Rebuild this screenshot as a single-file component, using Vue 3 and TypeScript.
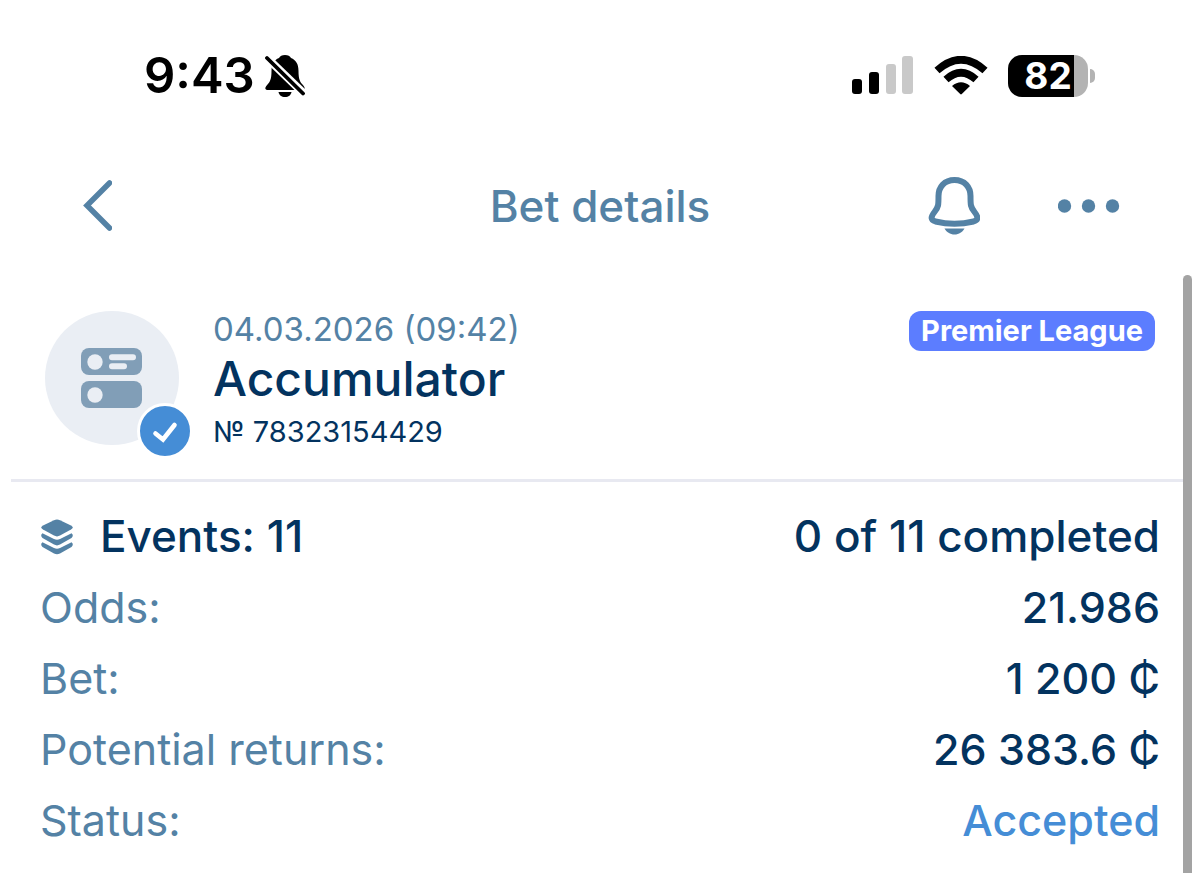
<script setup lang="ts">
interface Row {
  label: string
  value: string
  tone?: 'accent'
}

const time = '9:43'
const battery = 82

const bet = {
  date: '04.03.2026 (09:42)',
  kind: 'Accumulator',
  number: '№ 78323154429',
  league: 'Premier League',
  events: 11,
  completed: 0,
}

const rows: Row[] = [
  { label: 'Odds:', value: '21.986' },
  { label: 'Bet:', value: '1 200 ₵' },
  { label: 'Potential returns:', value: '26 383.6 ₵' },
  { label: 'Status:', value: 'Accepted', tone: 'accent' },
]
</script>

<template>
  <div class="screen">
    <div class="status-bar">
      <div class="clock">
        <span>{{ time }}</span>
        <svg width="40" height="44" viewBox="0 0 40 44" aria-label="Silent mode">
          <path d="M20 1c-3 0-5 1.200-6 3C9 6 6.500 10 6.500 17c0 8-1.500 11-4 13.500C.500 32.500 0 34 .500 35q.500 1 2 1h35q1.500 0 2-1c.500-1 0-2.500-2-4.500-2.500-2.500-4-5.500-4-13.500 0-7-2.500-11-7.500-13C25 2.200 23 1 20 1z" />
          <path d="M13.500 38h13c-.500 3-3 5-6.500 5s-6-2-6.500-5z" />
          <path d="M-1 1L40 40.500" fill="none" stroke="#fff" stroke-width="8" />
          <path d="M2 4L38 39.500" fill="none" stroke="#000" stroke-width="3.800" stroke-linecap="round" />
        </svg>
      </div>
      <div class="indicators">
        <svg width="62" height="40" viewBox="0 0 62 40" aria-label="Signal">
          <rect x="0" y="23" width="10" height="15" rx="3" />
          <rect x="17" y="16" width="10" height="22" rx="3" />
          <rect x="34" y="8" width="10" height="30" rx="3" fill="#c9c9c9" />
          <rect x="50" y="0" width="11" height="38" rx="3" fill="#c9c9c9" />
        </svg>
        <svg width="54" height="40" viewBox="0 0 54 40" aria-label="Wi-Fi">
          <path d="M3 14.500Q27-7 51 14.500" fill="none" stroke="#000" stroke-width="7.600" />
          <path d="M12 23.500Q27 10 42 23.500" fill="none" stroke="#000" stroke-width="7.600" />
          <path d="M18 30Q27 22.500 36 30L27.800 38q-.800.800-1.600 0z" />
        </svg>
        <div class="battery">
          <span class="battery-body">{{ battery }}</span>
          <span class="battery-tip"></span>
        </div>
      </div>
    </div>

    <header class="nav">
      <button type="button" class="icon-button back" aria-label="Back">
        <svg width="32" height="54" viewBox="0 0 32 54">
          <path d="M29.500 4L7 26.500L29.500 49" fill="none" stroke="currentColor" stroke-width="5.500" stroke-linecap="round" stroke-linejoin="miter" />
        </svg>
      </button>
      <h1>Bet details</h1>
      <div class="actions">
        <button type="button" class="icon-button" aria-label="Notifications">
          <svg width="52" height="60" viewBox="0 0 52 60">
            <path d="M26.500 4C16.500 4 10.500 11 10.500 20c0 9 0 11-4 16-4 5-4 8 1 9.500q19 4.500 38 0c5-1.500 5-4.500 1-9.500-4-5-4-7-4-16C42.500 11 36.500 4 26.500 4z" fill="none" stroke="currentColor" stroke-width="6" stroke-linejoin="round" />
            <path d="M16.500 52.500h20c-2 3.500-5.500 6-10 6s-8-2.500-10-6z" fill="currentColor" />
          </svg>
        </button>
        <button type="button" class="icon-button" aria-label="More">
          <svg width="62" height="14" viewBox="0 0 62 14" fill="currentColor">
            <circle cx="6.500" cy="7" r="6.700" />
            <circle cx="30.500" cy="7" r="6.700" />
            <circle cx="54.500" cy="7" r="6.700" />
          </svg>
        </button>
      </div>
    </header>

    <main class="content">
      <section class="summary">
        <div class="avatar">
          <svg width="62" height="62" viewBox="0 0 62 62">
            <rect x="0" y="1" width="61" height="27" rx="8" fill="#819eb7" />
            <circle cx="14" cy="15" r="7.700" fill="#eaeef4" />
            <path d="M31 10.200H52M31 19.300H43" stroke="#eaeef4" stroke-width="6" stroke-linecap="round" />
            <rect x="0" y="34" width="61" height="27" rx="8" fill="#819eb7" />
            <circle cx="14" cy="48" r="7.700" fill="#eaeef4" />
          </svg>
          <span class="check">
            <svg width="50" height="50" viewBox="0 0 50 50">
              <path d="M15.500 27.500L23 33.500L34.500 19" fill="none" stroke="#fff" stroke-width="4.600" stroke-linecap="round" stroke-linejoin="miter" />
            </svg>
          </span>
        </div>
        <div class="info">
          <span class="date">{{ bet.date }}</span>
          <h2>{{ bet.kind }}</h2>
          <span class="number">{{ bet.number }}</span>
        </div>
        <span class="league">{{ bet.league }}</span>
      </section>

      <dl class="details">
        <div class="row strong">
          <dt>
            <svg width="34" height="36" viewBox="0 0 34 36" fill="#5482a5">
              <path d="M14 1.200q3-1.400 6 0l11 5.200q3.400 2.100 0 4.200l-11 6q-3 1.600-6 0l-11-6Q-.400 8.500 3 6.400z" />
              <path d="M2.500 14.300L14 20.100q3 1.400 6 0l11.500-5.800q2.600 2.200 0 4.700L20 25.600q-3 1.600-6 0L2.500 19q-2.600-2.500 0-4.700z" />
              <path d="M2.500 23.300L14 29.100q3 1.400 6 0l11.500-5.800q2.600 2.200 0 4.700L20 34.400q-3 1.600-6 0L2.500 28q-2.600-2.500 0-4.700z" />
            </svg>
            <span>Events: {{ bet.events }}</span>
          </dt>
          <dd>{{ bet.completed }} of {{ bet.events }} completed</dd>
        </div>
        <div v-for="row in rows" :key="row.label" class="row">
          <dt>{{ row.label }}</dt>
          <dd :class="row.tone">{{ row.value }}</dd>
        </div>
      </dl>
      <div class="scroll-thumb"></div>
    </main>
  </div>
</template>

<style>
body {
  margin: 0;
  background: #fff;
}
</style>

<style scoped>
.screen {
  display: flex;
  flex-direction: column;
  min-height: 100vh;
  overflow: hidden;
  background: #fff;
  color: #03335f;
  font-family: Inter, "Liberation Sans", sans-serif;
}

.screen,
.screen * {
  box-sizing: border-box;
}

svg {
  display: block;
  flex: none;
}

.status-bar {
  display: flex;
  justify-content: space-between;
  align-items: center;
  height: 152px;
  padding: 0 105px 0 144px;
  color: #000;
}

.clock {
  display: flex;
  align-items: center;
  gap: 10px;
  font-size: 49px;
  font-weight: 600;
  line-height: 60px;
}

.indicators {
  display: flex;
  align-items: center;
  gap: 20px;
}

.battery {
  display: flex;
  align-items: center;
  gap: 2px;
}

.battery-body {
  width: 80px;
  height: 42px;
  border-radius: 14px;
  background: linear-gradient(to right, #000 66px, #b3b3b3 66px);
  color: #fff;
  font-size: 37px;
  font-weight: 700;
  line-height: 42px;
  text-align: center;
}

.battery-tip {
  width: 5px;
  height: 14px;
  border-radius: 0 7px 7px 0;
  background: #b3b3b3;
}

.nav {
  display: grid;
  grid-template-columns: 1fr auto 1fr;
  align-items: center;
  height: 108px;
  padding: 0 80px;
  color: #5482a5;
}

h1,
h2,
dl,
dd {
  margin: 0;
}

h1 {
  font-size: 44px;
  font-weight: 500;
  line-height: 56px;
}

.icon-button {
  display: flex;
  padding: 0;
  border: 0;
  background: none;
  color: inherit;
  cursor: pointer;
}

.back {
  justify-self: start;
}

.actions {
  display: flex;
  justify-content: flex-end;
  align-items: center;
  gap: 78px;
}

.content {
  position: relative;
  flex: 1;
}

.summary {
  display: flex;
  align-items: flex-start;
  gap: 34px;
  margin: 0 12px 0 11px;
  padding: 51px 33px 26px 34px;
  border-bottom: 3px solid #e8e9f1;
}

.avatar {
  position: relative;
  display: flex;
  justify-content: center;
  align-items: center;
  flex: none;
  width: 134px;
  height: 134px;
  border-radius: 50%;
  background: #eaeef4;
}

.check {
  position: absolute;
  right: -14px;
  bottom: -14px;
  border: 3px solid #fff;
  border-radius: 50%;
  background: #458dd6;
}

.info {
  display: flex;
  flex: 1;
  flex-direction: column;
}

.date {
  color: #5482a5;
  font-size: 33px;
  line-height: 36px;
}

h2 {
  font-size: 48px;
  font-weight: 500;
  line-height: 64px;
}

.number {
  font-size: 29px;
  line-height: 42px;
}

.league {
  padding: 0 12px;
  border-radius: 12px;
  background: #5c7dff;
  color: #fff;
  font-size: 29px;
  font-weight: 700;
  line-height: 40px;
}

.details {
  padding: 19px 40px 18px;
}

.row {
  display: flex;
  justify-content: space-between;
  align-items: center;
  font-size: 43px;
  line-height: 71px;
}

.row.strong {
  font-size: 44px;
}

dt {
  display: flex;
  align-items: center;
  gap: 26px;
  color: #5482a5;
}

dd {
  font-weight: 500;
}

.strong dt {
  color: inherit;
  font-weight: 500;
}

.accent {
  color: #458dd6;
}

.scroll-thumb {
  position: absolute;
  top: 15px;
  right: 8px;
  bottom: -8px;
  width: 9px;
  border-radius: 5px;
  background: #a3a3a3;
}
</style>
